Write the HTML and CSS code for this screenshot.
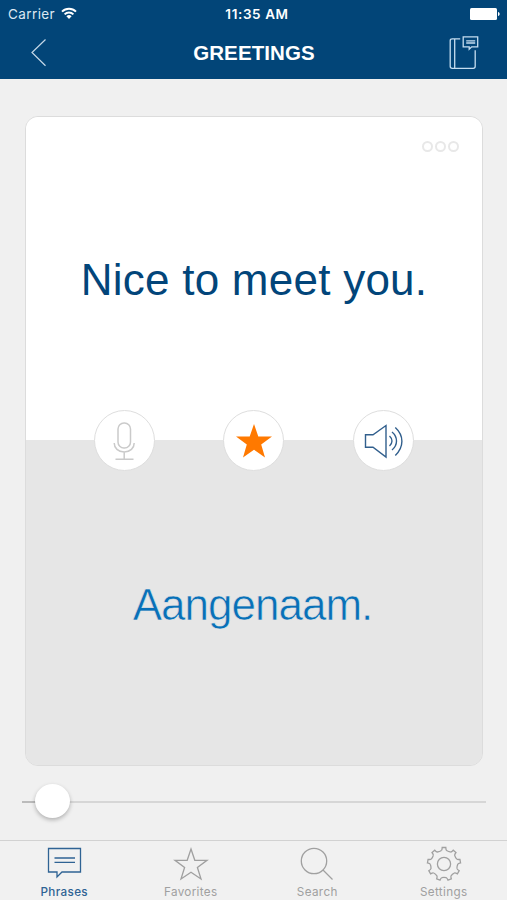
FILE: index.html
```html
<!DOCTYPE html>
<html lang="en">
<head>
<meta charset="utf-8">
<title>Greetings</title>
<link rel="stylesheet" href="styles.css">
</head>
<body>
<div class="app">
  <header class="header">
    <div class="status">
      <div class="carrier"><span>Carrier</span>
        <svg width="16" height="13" viewBox="0 0 16 13" fill="none" stroke="#fff" stroke-width="2"><path d="M1 4.6a10 10 0 0 1 14 0M3.6 7.4a6.3 6.3 0 0 1 8.8 0"/><path d="M5.4 9.3a3.8 3.8 0 0 1 5.2 0L8 12z" fill="#fff" stroke="none"/></svg>
      </div>
      <div class="time">11:35 AM</div>
      <div class="power"><svg width="32" height="14" viewBox="0 0 32 14" fill="#fff"><rect x="2" y="1" width="27" height="12" rx="1.5"/><path d="M30 5c2.2.5 2.2 3.5 0 4z"/></svg></div>
    </div>
    <div class="nav">
      <svg class="back" width="18" height="30" viewBox="0 0 18 30" fill="none" stroke="#c5d8e8" stroke-width="1.2"><path d="M15.500 1.500 2 14.500l13.500 13.300"/></svg>
      <h1>GREETINGS</h1>
      <svg class="book" width="30" height="34" viewBox="-.7 .7 30 34" fill="none" stroke="#c5ddf0" stroke-width="1.3"><path d="M11.500 3.500H3.500Q1.500 3.500 1.500 5.500V31Q1.500 33 3.500 33H24.500Q26.500 33 26.500 31V15M6 3.500V33"/><path d="M14.500 1.500h14.500v10h-6l-2.500 2.500v-2.500h-6zM17.500 5.500h9M17.500 7.700h9"/></svg>
    </div>
  </header>
  <main class="content">
    <section class="card">
      <div class="front"><div class="dots"><i></i><i></i><i></i></div><p>Nice to meet you.</p></div>
      <div class="reverse"><p>Aangenaam.</p></div>
      <div class="actions">
        <button aria-label="Record"><svg width="40" height="40" viewBox="-20 -20 40 40" fill="none" stroke="#cacaca" stroke-width="1.5"><rect x="-7" y="-18" width="12.500" height="25" rx="6"/><path d="M-10.800 2c0 5 4 9 10 9s10-4 10-9M-.8 11v7M-9.500 18.300H8.500"/></svg></button>
        <button aria-label="Favorite"><svg width="40" height="40" viewBox="-20 -19.500 40 40" fill="#ff7900"><path d="M0-16.500 4.300-4H18L7.200 4 11 17 0 9.200-11 17-7.200 4-18-4H-4.300z"/></svg></button>
        <button aria-label="Listen"><svg width="40" height="40" viewBox="-20 -20 40 40" fill="none" stroke="#315f8d" stroke-width="1.4"><path d="M-18.500-6.200h7.500L2-15.500v31.500L-11 6.200h-7.500zM5.500-5c3.300 3 3.300 7 0 10M8-9c6 5 6 13 0 18M11.300-13.500c8.800 8 8.800 19.500 0 28"/></svg></button>
      </div>
    </section>
    <div class="slider"><span class="thumb"></span></div>
  </main>
  <nav class="tabs">
    <a class="tab active"><svg width="36" height="36" viewBox="-18 -18 36 36"><path d="M-15.500-15.500h32V8H-2L-7 13V8H-15.500zM-9.500-6H11M-9.500-1.700H11"/></svg><span>Phrases</span></a>
    <a class="tab"><svg width="36" height="36" viewBox="-18 -18 36 36"><path d="M0-15 3.800-3.700H16L6.400 3.500 10 15 0 8.300-10 15-6.400 3.500-16-3.700H-3.800z"/></svg><span>Favorites</span></a>
    <a class="tab"><svg width="36" height="36" viewBox="-18 -18 36 36"><circle cx="-3" cy="-3" r="12.700"/><path d="m6 6 9.500 9.500"/></svg><span>Search</span></a>
    <a class="tab"><svg width="36" height="36" viewBox="-18 -18 36 36"><defs><path id="tooth" d="M-2.600-13.500Q-1.900-14-1.800-16.500H1.800Q1.900-14 2.600-13.500Q4.600-12.200 6.700-12"/></defs><use href="#tooth"/><use href="#tooth" transform="rotate(40)"/><use href="#tooth" transform="rotate(80)"/><use href="#tooth" transform="rotate(120)"/><use href="#tooth" transform="rotate(160)"/><use href="#tooth" transform="rotate(200)"/><use href="#tooth" transform="rotate(240)"/><use href="#tooth" transform="rotate(280)"/><use href="#tooth" transform="rotate(320)"/><circle r="6.600"/></svg><span>Settings</span></a>
  </nav>
</div>
</body>
</html>
```
FILE: styles.css
```css
* { box-sizing: border-box; }
body { margin: 0; font-family: "Liberation Sans", sans-serif; }
svg { display: block; overflow: visible; }
.app { width: 507px; height: 900px; display: flex; flex-direction: column; background: #f0f0f0; overflow: hidden; }
.header { height: 79px; background: #024578; color: #fff; }
.status { height: 28px; padding: 0 7px 0 8px; display: grid; grid-template-columns: 1fr auto 1fr; align-items: center; font: 13.5px/28px Inter, sans-serif; }
.carrier { display: flex; align-items: center; gap: 6px; color: #dce8f2; letter-spacing: .4px; }
.carrier svg { margin-top: -2px; }
.time { font-weight: 600; font-size: 13.5px; letter-spacing: .6px; margin-left: 6px; }
.power { justify-self: end; }
.nav { height: 51px; display: grid; grid-template-columns: 60px 1fr 60px; align-items: center; padding: 0 29px 2px 30px; }
.nav h1 { margin: 0; font-size: 20.5px; line-height: 24px; text-align: center; letter-spacing: .1px; }
.book { justify-self: end; }
.content { flex: 1; padding: 37px 21px 0 22px; }
.card { position: relative; height: 650px; margin: 0 3px; border: 1px solid #dcdcdc; border-radius: 13px; overflow: hidden; display: grid; grid-template-rows: 323px 1fr; }
.front, .reverse { display: flex; align-items: center; justify-content: center; }
.front { position: relative; background: #fff; color: #02457a; }
.reverse { background: #e6e6e6; color: #0870b8; }
.card p { margin: 0; white-space: nowrap; }
.front p { font-size: 44px; line-height: 50px; letter-spacing: .25px; padding-top: 3px; }
.reverse p { font-size: 44px; line-height: 50px; letter-spacing: -1px; padding: 4px 3px 0 0; -webkit-text-stroke: .6px #e6e6e6; }
.dots { position: absolute; top: 24px; right: 23px; display: flex; gap: 2px; }
.dots i { width: 11px; height: 11px; border: 2px solid #e8e8e8; border-radius: 50%; }
.actions { position: absolute; top: 293px; left: 68px; right: 68px; display: flex; justify-content: space-between; }
.actions button { width: 61px; height: 61px; padding: 0; border: 1px solid #dedede; border-radius: 50%; background: #fff; display: grid; place-items: center; }
.actions button:nth-child(2) { margin-left: -1px; }
.slider { height: 35px; margin-top: 18px; padding-left: 13px; background: linear-gradient(#bbb, #bbb) 0 17px / 20px 2px no-repeat, linear-gradient(#d6d6d6, #d6d6d6) 0 17px / 100% 2px no-repeat; }
.thumb { display: block; width: 35px; height: 34px; border-radius: 50%; background: #fff; box-shadow: 0 2px 4px #0004; }
.tabs { height: 60px; border-top: 1px solid #d2d2d2; background: #f1f1f1; display: grid; grid-template-columns: repeat(4, 1fr); padding-left: 1px; }
.tab { display: flex; flex-direction: column; align-items: center; padding-top: 5px; color: #a0a0a0; font: 11.7px/16px Inter, sans-serif; letter-spacing: .35px; }
.tab svg { fill: none; stroke: currentColor; stroke-width: 1.3; }
.tab span { margin-top: 2px; }
.tab.active { color: #2f6394; }
.active span { font-weight: 500; }
```
